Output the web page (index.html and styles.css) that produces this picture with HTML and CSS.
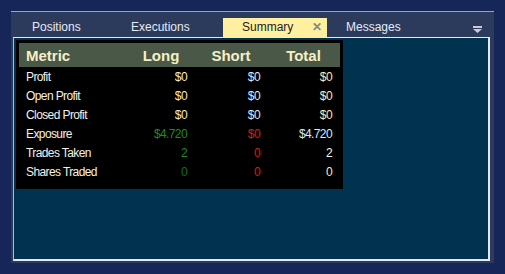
FILE: index.html
```html
<!DOCTYPE html>
<html lang="en">
<head>
    <meta charset="UTF-8">
    <meta name="viewport" content="width=device-width, initial-scale=1.0">
    <title>Summary</title>
    <link rel="stylesheet" href="styles.css">
</head>
<body>
    <div class="panel">
        <div class="tabs">
            <div class="tab tab-positions">Positions</div>
            <div class="tab tab-executions">Executions</div>
            <div class="tab tab-summary active">Summary <span class="close">✕</span></div>
            <div class="tab tab-messages">Messages</div>
            <div class="menu">
                <svg width="9" height="7" viewBox="0 0 9 7">
                    <rect x="0" y="0" width="9" height="2" fill="#c9ccd6"/>
                    <polygon points="0,3 9,3 4.5,7" fill="#c9ccd6"/>
                </svg>
            </div>
        </div>
        <div class="content">
            <div class="summary">
                <div class="row head">
                    <div class="metric">Metric</div>
                    <div class="c-long">Long</div>
                    <div class="c-short">Short</div>
                    <div class="c-total">Total</div>
                </div>
                <div class="row">
                    <div class="metric">Profit</div>
                    <div class="c-long warm">$0</div>
                    <div class="c-short cool">$0</div>
                    <div class="c-total warm">$0</div>
                </div>
                <div class="row">
                    <div class="metric">Open Profit</div>
                    <div class="c-long warm">$0</div>
                    <div class="c-short cool">$0</div>
                    <div class="c-total warm">$0</div>
                </div>
                <div class="row">
                    <div class="metric">Closed Profit</div>
                    <div class="c-long warm">$0</div>
                    <div class="c-short cool">$0</div>
                    <div class="c-total warm">$0</div>
                </div>
                <div class="row">
                    <div class="metric">Exposure</div>
                    <div class="c-long green">$4.720</div>
                    <div class="c-short red">$0</div>
                    <div class="c-total cool">$4.720</div>
                </div>
                <div class="row">
                    <div class="metric">Trades Taken</div>
                    <div class="c-long green">2</div>
                    <div class="c-short red">0</div>
                    <div class="c-total white">2</div>
                </div>
                <div class="row">
                    <div class="metric">Shares Traded</div>
                    <div class="c-long dgreen">0</div>
                    <div class="c-short red">0</div>
                    <div class="c-total warm">0</div>
                </div>
            </div>
        </div>
    </div>
</body>
</html>
```

FILE: styles.css
```css
body {
    margin: 0;
    padding: 11px;
    background: #162659;
    font-family: "Liberation Sans", Arial, sans-serif;
    block-size: 274px;
    box-sizing: border-box;
}

.panel {
    inline-size: 483px;
    block-size: 252px;
    box-sizing: border-box;
    background: #2c3a5c;
    border-top: 1px solid #d9955c;
    padding: 6px 4px 2px 2px;
    display: flex;
    flex-direction: column;
}

.tabs {
    display: flex;
    block-size: 19px;
    align-items: stretch;
}

.tab {
    font-size: 12px;
    color: #e6eaf6;
    line-height: 19px;
    padding-inline-start: 19px;
    box-sizing: border-box;
}

.tab-positions { inline-size: 99px; }
.tab-executions { inline-size: 111px; }
.tab-summary { inline-size: 104px; }
.tab-messages { inline-size: 100px; }

.tab.active {
    background: #fff0a0;
    color: #1c1c1c;
}

.close {
    color: #8e8772;
    font-size: 12px;
    font-weight: bold;
    margin-inline-start: 15px;
}

.menu {
    margin-inline-start: auto;
    margin-inline-end: 8px;
    display: flex;
    align-items: center;
    padding-block-start: 3px;
}

.content {
    flex: 1;
    background: #013350;
    border-top: 1px solid #fff0a0;
    border-left: 1px solid #b7bccb;
    border-right: 2px solid #e4e8f2;
    border-bottom: 2px solid #e4e8f2;
    padding: 2px;
    box-sizing: border-box;
}

.summary {
    inline-size: 327px;
    block-size: 149px;
    box-sizing: border-box;
    background: #000;
    padding: 3px;
}

.row {
    display: grid;
    grid-template-columns: 114px 60px 73px 74px;
    block-size: 19px;
    align-items: center;
    font-size: 12px;
    letter-spacing: -0.6px;
    color: #f4f2ea;
}

.row .metric {
    padding-inline-start: 7px;
}

.row .c-long,
.row .c-short {
    text-align: right;
    padding-inline-end: 6px;
}

.row .c-total {
    text-align: right;
    padding-inline-end: 8px;
}

.row.head {
    block-size: 24px;
    background: #4a5848;
    font-size: 15px;
    font-weight: bold;
    letter-spacing: 0;
    color: #f6efc6;
}

.row.head .c-long,
.row.head .c-short,
.row.head .c-total {
    text-align: center;
    padding-inline-end: 0;
}

.row.head .c-long { padding-inline-end: 4px; }
.row.head .c-short { padding-inline-start: 3px; }
.row.head .c-total { padding-inline-start: 1px; }

.warm { color: #fde9b8; }
.cool { color: #d6eaff; }
.white { color: #f6f6f6; }
.green { color: #1e8c1e; }
.dgreen { color: #127012; }
.red { color: #e11414; }
```
